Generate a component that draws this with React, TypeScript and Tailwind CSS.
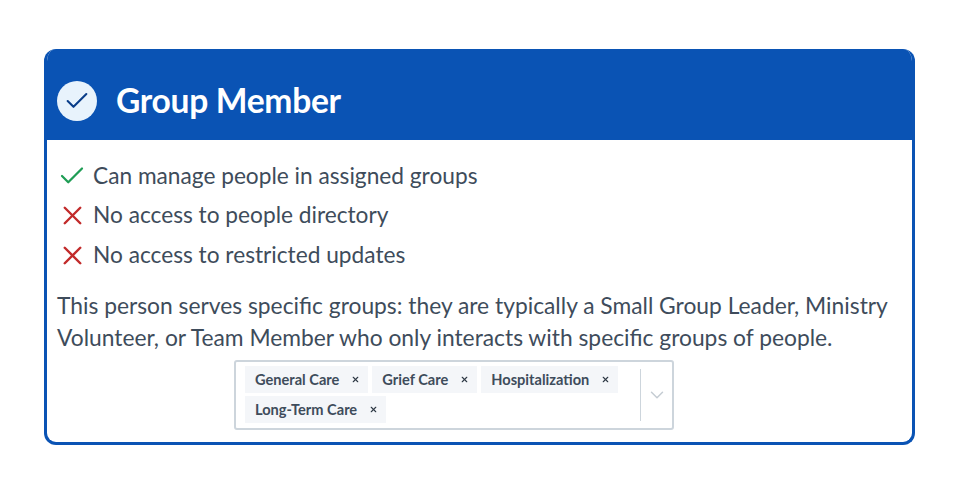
import { Check, X, ChevronDown } from 'lucide-react'

const rules = [
  { ok: true, text: 'Can manage people in assigned groups' },
  { ok: false, text: 'No access to people directory' },
  { ok: false, text: 'No access to restricted updates' },
]

function Tag({ label }: { label: string }) {
  return (
    <div className="flex h-[27px] items-center bg-[#f4f6f9] pl-[10px] pr-[8px] text-[14.6px] font-bold text-[#3e4c5b]">
      <span>{label}</span>
      <X size={9} strokeWidth={3} className="ml-[12px] text-[#2f3a46]" />
    </div>
  )
}

export default function App() {
  return (
    <div className="h-[504px] w-[960px] bg-white pl-[44px] pt-[49px] font-['Lato',sans-serif]">
      <div className="flex h-[396px] w-[871px] flex-col overflow-hidden rounded-[12px] border-[3px] border-t-0 border-[#0a53b4]">
        <div className="flex h-[91px] shrink-0 items-center gap-[19px] bg-[#0a53b4] pl-[10px] pt-[12px]">
          <div className="flex h-[40px] w-[40px] items-center justify-center rounded-full bg-[#e8f3fc]">
            <Check size={28} strokeWidth={1.8} className="text-[#0b3f8a]" />
          </div>
          <h1 className="text-[33.6px] font-bold tracking-[-0.3px] text-white">Group Member</h1>
        </div>
        <div className="flex flex-1 flex-col pl-[10px] pt-[21px] text-[#3e4c5b]">
          <ul className="flex flex-col gap-[9.5px]">
            {rules.map(r => (
              <li key={r.text} className="flex h-[30px] items-center text-[22.7px]">
                <span className="mr-[6px] flex w-[30px] shrink-0 justify-center">
                  {r.ok ? (
                    <Check size={30} strokeWidth={1.8} className="shrink-0 text-[#1f9d55]" />
                  ) : (
                    <X size={31} strokeWidth={1.9} className="shrink-0 text-[#c22b2b]" />
                  )}
                </span>
                {r.text}
              </li>
            ))}
          </ul>
          <p className="mt-[19px] w-[850px] text-[22.8px] leading-[32px]">
            This person serves specific groups: they are typically a Small Group Leader, Ministry Volunteer, or Team Member who only interacts with specific groups of people.
          </p>
          <div className="ml-[177px] mt-[7px] flex h-[70px] w-[440px] rounded-[3px] border-2 border-[#cdd5dc] bg-white">
            <div className="flex flex-1 flex-wrap content-start gap-x-[4px] gap-y-[3px] pl-[9px] pt-[4px]">
              <Tag label="General Care" />
              <Tag label="Grief Care" />
              <Tag label="Hospitalization" />
              <Tag label="Long-Term Care" />
            </div>
            <div className="my-[7px] w-px bg-[#cdd5dc]" />
            <div className="flex w-[31px] items-center justify-center">
              <ChevronDown size={22} strokeWidth={1.6} className="shrink-0 text-[#c5ccd3]" />
            </div>
          </div>
        </div>
      </div>
    </div>
  )
}
